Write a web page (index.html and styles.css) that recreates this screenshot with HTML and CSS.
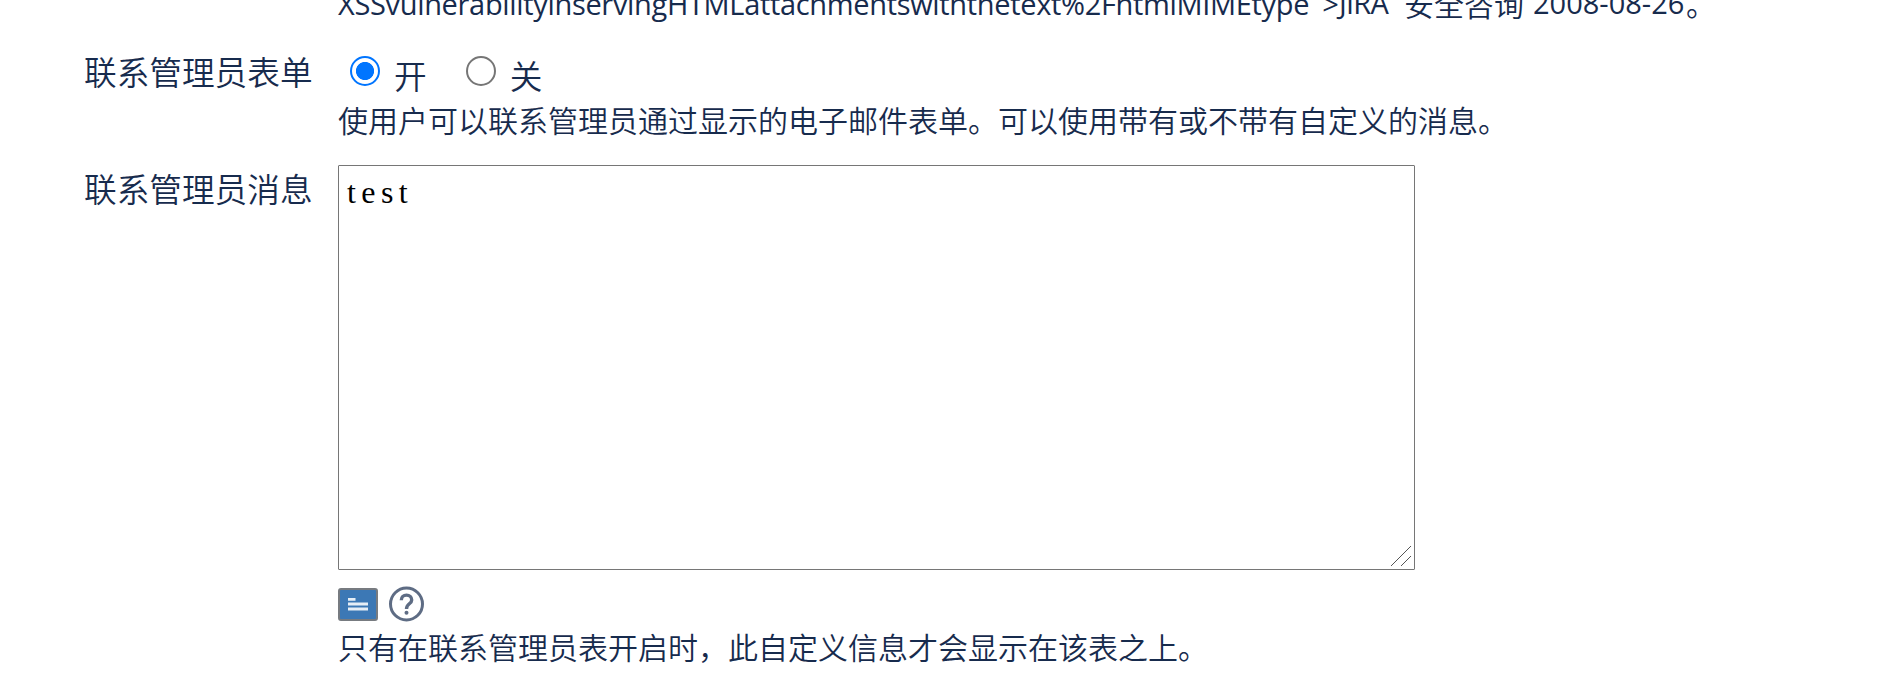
FILE: index.html
```html
<!DOCTYPE html>
<html lang="zh-CN">
<head>
<meta charset="utf-8">
<title>JIRA</title>
<link rel="stylesheet" href="styles.css">
</head>
<body>
<form class="form">
  <div class="description advisory"><span class="advisory-link">XSSvulnerabilityinservingHTMLattachmentswiththetext%2FhtmlMIMEtype<span class="quote">"</span>&gt;</span><span class="advisory-product">JIRA</span><span class="advisory-title">安全咨询</span><span class="advisory-date">2008-08-26</span>。</div>
  <div class="row row-form">
    <div class="label">联系管理员表单</div>
    <div class="field">
      <div class="radios">
        <label class="option"><input class="radio" type="radio" name="contact" checked><span class="option-text">开</span></label>
        <label class="option"><input class="radio" type="radio" name="contact"><span class="option-text">关</span></label>
      </div>
      <div class="description">使用户可以联系管理员通过显示的电子邮件表单。可以使用带有或不带有自定义的消息。</div>
    </div>
  </div>
  <div class="row row-message">
    <label class="label" for="message">联系管理员消息</label>
    <div class="field">
      <div class="editor">
        <textarea class="message" id="message" spellcheck="false">test</textarea>
        <svg class="grip" width="20" height="20" viewBox="0 0 20 20"><path d="M0 20 20 0M10 20 20 10" fill="none" stroke="#555" stroke-width="1"/></svg>
      </div>
      <div class="tools">
        <svg width="40" height="33" viewBox="0 0 40 33"><rect x="1" y="1" width="38" height="31" rx="2" fill="#3c78b5" stroke="#777b80" stroke-width="2"/><path d="M10 11.3h7.5M10 16h20M10 21h20" fill="none" stroke="#e6eef6" stroke-width="2.8"/></svg>
        <svg width="36" height="36" viewBox="0 0 36 36" fill="none" stroke="#5e6c84"><circle cx="18.5" cy="18" r="16" stroke-width="3"/><path d="M13.3 14.2c0-3.2 2.2-5.1 5.2-5.1s5.2 2 5.2 4.8c0 4.2-5.2 3.7-5.2 9" stroke-width="3.4"/><circle cx="18.5" cy="26.7" r="2" fill="#5e6c84" stroke="none"/></svg>
      </div>
      <div class="description">只有在联系管理员表开启时，此自定义信息才会显示在该表之上。</div>
    </div>
  </div>
</form>
</body>
</html>
```
FILE: styles.css
```css
body {
  margin: 0;
  height: 692px;
  overflow: hidden;
  background: #fff;
  color: #172b4d;
  font-family: "Open Sans", "Noto Sans CJK SC", sans-serif;
}
.form { display: flex; flex-direction: column; }
.description {
  height: 40px;
  font: 350 30px/40px "Noto Sans CJK SC", sans-serif;
  white-space: nowrap;
}
.advisory { display: flex; margin: -17px 0 0 338px; }
.advisory-link, .advisory-product, .advisory-date { font-family: "Open Sans", sans-serif; font-weight: 400; font-size: 29px; }
.advisory-link { width: 1001px; letter-spacing: -0.33px; }
.quote { display: inline-block; width: 13px; vertical-align: 6px; line-height: 1; }
.advisory-product { width: 65px; letter-spacing: -0.8px; }
.advisory-title { width: 129px; }
.advisory-date { width: 153px; }
.row { display: flex; padding-left: 84px; }
.row-form { margin-top: 27px; height: 115px; }
.label { width: 254px; height: 42px; font: 350 32.67px/42px "Noto Sans CJK SC", sans-serif; }
.row-message .label { margin-top: 2px; }
.field { display: flex; flex-direction: column; }
.radios { display: flex; gap: 39px; height: 49px; padding-left: 12px; }
.option { display: flex; align-items: flex-start; gap: 14px; font: 350 32.67px/50px "Noto Sans CJK SC", sans-serif; }
.radio {
  appearance: none;
  box-sizing: border-box;
  width: 30px;
  height: 30px;
  margin: 6px 0 0;
  border: 2px solid #767676;
  border-radius: 50%;
}
.radio:checked {
  border-color: #0075ff;
  background: radial-gradient(circle, #0075ff 8.7px, #fff 9.4px);
}
.editor { display: grid; width: 1077px; height: 405px; }
.message {
  grid-area: 1 / 1;
  box-sizing: border-box;
  width: 100%;
  height: 100%;
  margin: 0;
  padding: 6px 8px;
  border: 1px solid #767676;
  border-radius: 1px;
  outline: none;
  resize: none;
  background: #fff;
  color: #000;
  font: 32px/40px "Liberation Serif", serif;
  letter-spacing: 5.4px;
}
.grip { grid-area: 1 / 1; place-self: end; margin: 0 4px 4px 0; z-index: 1; }
.tools { display: flex; gap: 10px; align-items: center; height: 36px; margin-top: 16px; }
.row-message .description { margin-top: 4px; }
```
